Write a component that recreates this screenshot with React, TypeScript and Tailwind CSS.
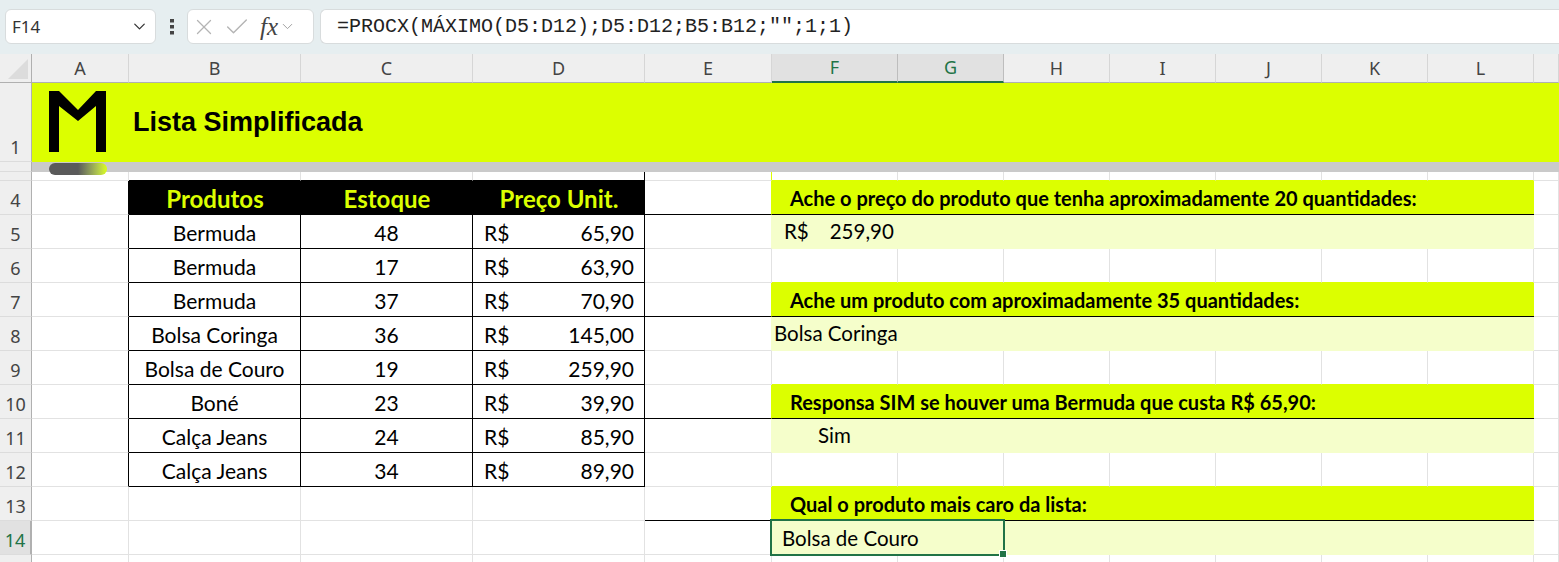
import React from 'react';
import { ChevronDown, X, Check } from 'lucide-react';

const LIME = 'bg-[#dcff00]';
const PALE = 'bg-[#f5fecb]';

const columns = ['A', 'B', 'C', 'D', 'E', 'F', 'G', 'H', 'I', 'J', 'K', 'L', ''];

const products = [
  ['Bermuda', '48', '65,90'],
  ['Bermuda', '17', '63,90'],
  ['Bermuda', '37', '70,90'],
  ['Bolsa Coringa', '36', '145,00'],
  ['Bolsa de Couro', '19', '259,90'],
  ['Boné', '23', '39,90'],
  ['Calça Jeans', '24', '85,90'],
  ['Calça Jeans', '34', '89,90'],
];

const RowHead = ({ n, selected }: { n?: string; selected?: boolean }) => (
  <div
    className={`flex items-end justify-center border-r border-b border-r-[#b0b0b0] border-b-[#dcdcdc] pb-[1px] font-['Noto_Sans',sans-serif] text-[18px] leading-[26px] ${
      selected ? 'bg-[#e1e1e1] border-r-2 border-r-[#217346] text-[#217346]' : 'bg-[#efefef] text-[#444]'
    }`}
  >
    {n}
  </div>
);

// plain empty cell with the sheet's gridlines
const Blank = ({ right = 'border-r-[#e2e2e2]', bottom = 'border-b-[#e2e2e2]' }: { right?: string; bottom?: string }) => (
  <div className={`border-r border-b bg-white ${right} ${bottom}`} />
);

const Heading = ({ text }: { text: string }) => (
  <div className={`col-span-7 flex items-center border-b border-b-black pl-[18px] pt-[1px] text-[20px] font-bold text-black ${LIME}`}>
    {text}
  </div>
);

const Answer = ({ children, className = '' }: { children?: React.ReactNode; className?: string }) => (
  <div className={`col-span-7 flex items-center border-b border-b-[#f5fecb] text-[20.5px] text-black ${PALE} ${className}`}>
    {children}
  </div>
);

const GapCells = ({ bottom }: { bottom: string }) => (
  <>
    <Blank bottom={bottom} />
    <Blank bottom={bottom} />
    <Blank bottom={bottom} />
    <Blank bottom={bottom} />
    <Blank bottom={bottom} />
    <Blank bottom={bottom} />
    <Blank bottom={bottom} />
  </>
);

const Toolbar = () => (
  <div className="relative flex h-[54px] items-start bg-[#e6eef0] pt-[9px] pl-[5px]">
    <div className="flex h-[35px] w-[151px] items-center justify-between rounded-[6px] border border-[#d8dcdd] bg-white pl-[6px] pr-[6px] font-['Noto_Sans',sans-serif] text-[17px] text-[#333]">
      F14
      <ChevronDown size={19} strokeWidth={1.6} className="text-[#333]" />
    </div>
    <svg width="4" height="16" viewBox="0 0 4 16" className="ml-[14px] mt-[10px]">
      <rect x="0" y="0" width="4" height="3.5" fill="#444" />
      <rect x="0" y="6" width="4" height="3.5" fill="#444" />
      <rect x="0" y="12" width="4" height="3.5" fill="#444" />
    </svg>
    <div className="ml-[13px] flex h-[35px] w-[127px] items-center rounded-[6px] border border-[#d8dcdd] bg-white pl-[3px]">
      <X size={26} strokeWidth={1.2} className="text-[#b4b4b4]" />
      <Check size={28} strokeWidth={1.2} className="ml-[6px] text-[#b4b4b4]" />
      <span className="ml-[9px] font-['Liberation_Serif',serif] text-[25px] italic leading-none text-[#444]">fx</span>
      <ChevronDown size={17} strokeWidth={1.3} className="ml-[1px] text-[#9a9a9a]" />
    </div>
    <div className="ml-[6px] flex h-[35px] flex-1 items-center rounded-l-[6px] border border-r-0 border-[#d8dcdd] bg-white pl-[16px] font-['Liberation_Mono',monospace] text-[20px] text-[#222]">
      =PROCX(MÁXIMO(D5:D12);D5:D12;B5:B12;"";1;1)
    </div>
  </div>
);

const Logo = () => (
  <svg width="58" height="62" viewBox="0 0 58 62" className="shrink-0">
    <path d="M0 0H10L29 19L47 0H57V61H47V15L29 30L10 15V61H0Z" fill="#000" />
  </svg>
);

const ProductRow = ({ row, index }: { row: string[]; index: number }) => (
  <>
    <RowHead n={String(index + 5)} />
    <Blank right="border-r-black" />
    <div className="flex items-center justify-center border-r border-b border-black bg-white pt-[2px]">{row[0]}</div>
    <div className="flex items-center justify-center border-r border-b border-black bg-white pt-[2px]">{row[1]}</div>
    <div className="flex items-center justify-between border-r border-b border-black bg-white pl-[11px] pr-[10px] pt-[2px]">
      <span>R$</span>
      <span>{row[2]}</span>
    </div>
  </>
);

export default function App() {
  return (
    <div className="h-[562px] w-[1559px] overflow-hidden bg-white font-['Lato',sans-serif] text-[21px] text-black">
      <Toolbar />

      <div className="relative grid grid-cols-[32px_97px_172px_172px_172px_127px_126px_106px_106px_106px_106px_106px_106px_25px] grid-rows-[29px_79px_10px_9px_repeat(11,34px)_34px]">
        {/* column letters */}
        <div className="border-r border-b border-r-[#b0b0b0] border-b-[#b0b0b0] bg-[#efefef] pl-[8px] pt-[5px]">
          <svg width="20" height="20" viewBox="0 0 20 20">
            <path d="M20 0V20H0Z" fill="#dcdcdc" />
          </svg>
        </div>
        {columns.map((c) => {
          const selected = c === 'F' || c === 'G';
          return (
            <div
              key={c}
              className={`flex items-center justify-center font-['Noto_Sans',sans-serif] text-[18px] ${
                selected
                  ? 'border-r border-b-2 border-r-[#bdbdbd] border-b-[#217346] bg-[#e1e1e1] text-[#217346]'
                  : 'border-r border-b border-r-[#d6d6d6] border-b-[#b0b0b0] bg-[#efefef] text-[#444]'
              }`}
            >
              {c}
            </div>
          );
        })}

        {/* row 1: title band */}
        <RowHead n="1" />
        <div className={`col-span-13 flex items-center pl-[17px] pb-[1px] ${LIME}`}>
          <Logo />
          <span className="ml-[26px] font-['Liberation_Sans',sans-serif] text-[27px] font-bold leading-none">Lista Simplificada</span>
        </div>

        {/* row 2: grey rule */}
        <RowHead />
        <div className="col-span-13 bg-[#cacaca]" />

        {/* row 3 */}
        <RowHead />
        <Blank />
        <Blank bottom="border-b-black" />
        <Blank bottom="border-b-black" />
        <Blank right="border-r-black" bottom="border-b-black" />
        <Blank right="border-r-[#dcff00]" />
        <GapCells bottom="border-b-[#dcff00]" />
        <Blank />

        {/* row 4 */}
        <RowHead n="4" />
        <Blank right="border-r-black" />
        {['Produtos', 'Estoque', 'Preço Unit.'].map((h) => (
          <div key={h} className="flex items-center justify-center border-b border-b-black bg-black pt-[2px] text-[24px] font-bold text-[#dcff00]">
            {h}
          </div>
        ))}
        <Blank right="border-r-[#dcff00]" bottom="border-b-black" />
        <Heading text="Ache o preço do produto que tenha aproximadamente 20 quantidades:" />
        <Blank />

        {/* row 5 */}
        <ProductRow row={products[0]} index={0} />
        <Blank right="border-r-[#f5fecb]" />
        <Answer className="pl-[12px]">
          <span>R$</span>
          <span className="ml-[21px]">259,90</span>
        </Answer>
        <Blank />

        {/* row 6 */}
        <ProductRow row={products[1]} index={1} />
        <Blank />
        <GapCells bottom="border-b-[#dcff00]" />
        <Blank />

        {/* row 7 */}
        <ProductRow row={products[2]} index={2} />
        <Blank right="border-r-[#dcff00]" bottom="border-b-black" />
        <Heading text="Ache um produto com aproximadamente 35 quantidades:" />
        <Blank />

        {/* row 8 */}
        <ProductRow row={products[3]} index={3} />
        <Blank right="border-r-[#f5fecb]" />
        <Answer className="pl-[2px]">Bolsa Coringa</Answer>
        <Blank />

        {/* row 9 */}
        <ProductRow row={products[4]} index={4} />
        <Blank />
        <GapCells bottom="border-b-[#dcff00]" />
        <Blank />

        {/* row 10 */}
        <ProductRow row={products[5]} index={5} />
        <Blank right="border-r-[#dcff00]" bottom="border-b-black" />
        <Heading text="Responsa SIM se houver uma Bermuda que custa R$ 65,90:" />
        <Blank />

        {/* row 11 */}
        <ProductRow row={products[6]} index={6} />
        <Blank right="border-r-[#f5fecb]" />
        <Answer className="pl-[46px]">Sim</Answer>
        <Blank />

        {/* row 12 */}
        <ProductRow row={products[7]} index={7} />
        <Blank />
        <GapCells bottom="border-b-[#dcff00]" />
        <Blank />

        {/* row 13 */}
        <RowHead n="13" />
        <Blank />
        <Blank />
        <Blank />
        <Blank />
        <Blank right="border-r-[#dcff00]" bottom="border-b-black" />
        <Heading text="Qual o produto mais caro da lista:" />
        <Blank />

        {/* row 14 */}
        <RowHead n="14" selected />
        <Blank />
        <Blank />
        <Blank />
        <Blank />
        <Blank right="border-r-[#f5fecb]" />
        <div className={`relative col-span-2 flex items-center pl-[10px] text-[20.5px] ${PALE}`}>
          Bolsa de Couro
          <div className="absolute -top-[2px] -left-[2px] -right-px -bottom-px border-2 border-[#217346]" />
          <div className="absolute -right-[2px] -bottom-[2px] h-[6px] w-[6px] bg-[#217346] outline outline-white" />
        </div>
        <div className={`col-span-5 ${PALE}`} />
        <Blank />

        {/* row 15 */}
        <RowHead />
        {columns.map((c) => (
          <Blank key={c} />
        ))}

        {/* smudge under the logo */}
        <div className="absolute left-[49px] top-[109px] h-[12px] w-[58px] rounded-full bg-gradient-to-r from-[#5a5a5a] via-[#5a5a5a] to-[#dcff00]" />
      </div>
    </div>
  );
}
